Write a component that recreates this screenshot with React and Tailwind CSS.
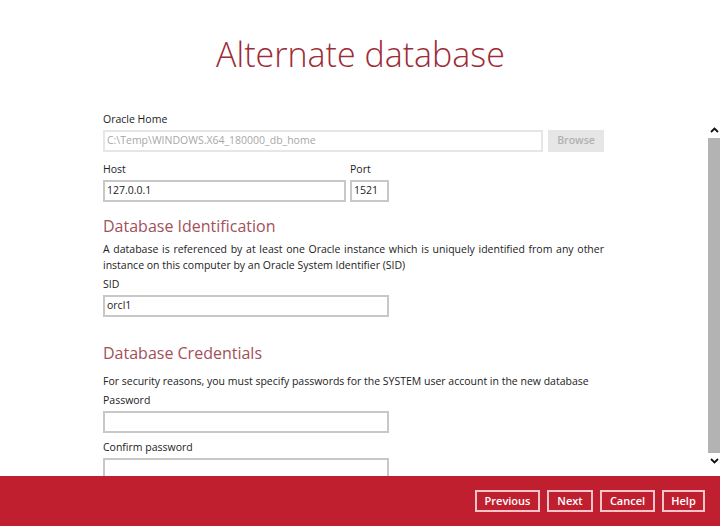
import React from 'react';

const Field = ({ label, value = '', className = '', disabled = false }) => (
  <div className={className}>
    <div className="text-[10.5px] text-[#222] leading-[14px] mb-[4px]">{label}</div>
    <div
      className={`h-[22px] border-2 px-[2px] flex items-center text-[10.5px] ${
        disabled ? 'border-[#e6e6e6] text-[#a8a8a8]' : 'border-[#c8c8c8] text-[#222]'
      }`}
    >
      {value}
    </div>
  </div>
);

const FooterButton = ({ children, width }) => (
  <button className={`h-[22px] ${width} border-2 border-[#f3c4c9] text-white text-[11px] font-semibold flex items-center justify-center`}>
    {children}
  </button>
);

const App = () => {
  return (
    <div className="w-[720px] h-[526px] flex flex-col bg-white" style={{ fontFamily: '"Open Sans", "Noto Sans", sans-serif' }}>
      <div className="h-[476px] flex overflow-hidden">
        <div className="flex-1 pl-[103px] pr-[104px]">
          <h1 className="text-center text-[#9e2b36] text-[34px] font-light leading-none pt-[37px] pl-[14px] h-[112px]">
            Alternate database
          </h1>

          <div className="flex gap-[5px] items-end">
            <Field label="Oracle Home" value="C:\Temp\WINDOWS.X64_180000_db_home" className="w-[440px]" disabled />
            <button className="h-[22px] w-[56px] bg-[#e6e6e6] text-[#b0b0b0] text-[10.5px] font-semibold">Browse</button>
          </div>

          <div className="flex gap-[4px] mt-[10px]">
            <Field label="Host" value="127.0.0.1" className="w-[243px]" />
            <Field label="Port" value="1521" className="w-[39px]" />
          </div>

          <h2 className="text-[16px] text-[#a3505a] font-normal leading-none mt-[16px]">Database Identification</h2>
          <p className="text-[10.5px] text-[#222] leading-[16px] mt-[7px] text-justify">
            A database is referenced by at least one Oracle instance which is uniquely identified from any other instance on this computer by an Oracle System Identifier (SID)
          </p>
          <Field label="SID" value="orcl1" className="w-[286px] mt-[4px]" />

          <h2 className="text-[16px] text-[#a3505a] font-normal leading-none mt-[28px]">Database Credentials</h2>
          <p className="text-[10.5px] text-[#222] leading-[16px] mt-[12px]">
            For security reasons, you must specify passwords for the SYSTEM user account in the new database
          </p>
          <Field label="Password" className="w-[286px] mt-[4px]" />
          <Field label="Confirm password" className="w-[286px] mt-[7px]" />
        </div>

        <div className="w-[13px] flex flex-col items-center pt-[127px]">
          <svg width="9" height="6" viewBox="0 0 9 6" className="mb-[5px]">
            <path d="M1 5 L4.5 1.5 L8 5" stroke="#111" strokeWidth="1.8" fill="none" />
          </svg>
          <div className="w-[13px] h-[315px] bg-[#b3b3b3]"></div>
          <svg width="9" height="6" viewBox="0 0 9 6" className="mt-[5px]">
            <path d="M1 1 L4.5 4.5 L8 1" stroke="#111" strokeWidth="1.8" fill="none" />
          </svg>
        </div>
      </div>

      <div className="h-[50px] bg-[#c01f30] flex items-center justify-end gap-[7px] pr-[15px]">
        <FooterButton width="w-[65px]">Previous</FooterButton>
        <FooterButton width="w-[46px]">Next</FooterButton>
        <FooterButton width="w-[55px]">Cancel</FooterButton>
        <FooterButton width="w-[43px]">Help</FooterButton>
      </div>
    </div>
  );
};

export default App;
